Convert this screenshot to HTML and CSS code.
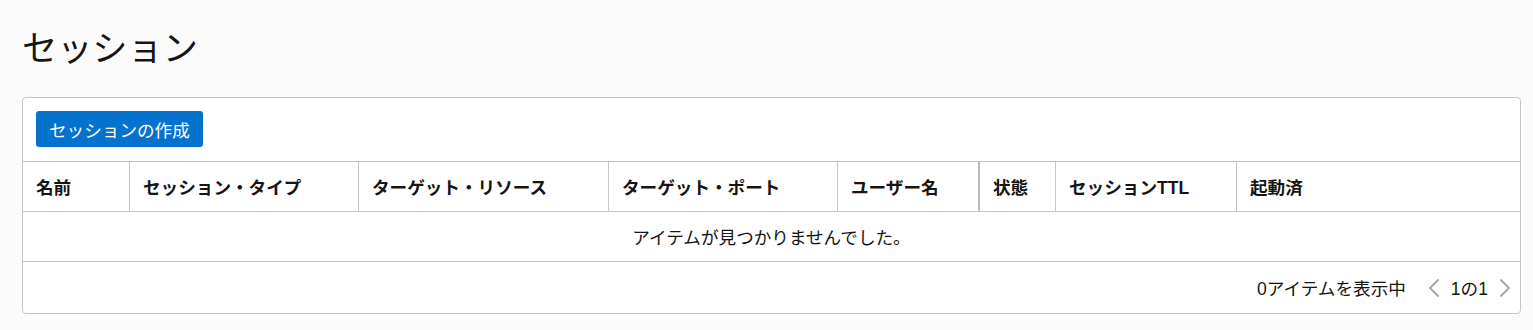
FILE: index.html
```html
<!DOCTYPE html>
<html lang="ja">

<head>
    <meta charset="UTF-8">
    <meta name="viewport" content="width=device-width, initial-scale=1.0">
    <title>セッション</title>
    <link rel="stylesheet" href="styles.css">
</head>

<body>
    <div class="page">
        <h1 class="page-title">セッション</h1>

        <div class="card">
            <div class="toolbar">
                <button class="btn-primary">セッションの作成</button>
            </div>

            <div class="grid">
                <div class="grid-head">
                    <div class="th">名前</div>
                    <div class="th">セッション・タイプ</div>
                    <div class="th">ターゲット・リソース</div>
                    <div class="th">ターゲット・ポート</div>
                    <div class="th sticky-edge">ユーザー名</div>
                    <div class="th">状態</div>
                    <div class="th">セッションTTL</div>
                    <div class="th last">起動済</div>
                </div>
                <div class="empty-row">アイテムが見つかりませんでした。</div>
            </div>

            <div class="pager">
                <span class="pager-count">0アイテムを表示中</span>
                <button class="pager-arrow" aria-label="前へ">
                    <svg width="12" height="20" viewBox="0 0 12 20"><path d="M10.5 1.5 L2 10 L10.5 18.5" fill="none" stroke="#a3a3a3" stroke-width="1.8"/></svg>
                </button>
                <span class="pager-page">1の1</span>
                <button class="pager-arrow" aria-label="次へ">
                    <svg width="12" height="20" viewBox="0 0 12 20"><path d="M1.5 1.5 L10 10 L1.5 18.5" fill="none" stroke="#a3a3a3" stroke-width="1.8"/></svg>
                </button>
            </div>
        </div>
    </div>
</body>

</html>
```

FILE: styles.css
```css
body {
    margin: 0;
    background-color: #fbfbfb;
    color: #161513;
    font-family: "Liberation Sans", "Noto Sans CJK JP", sans-serif;
    font-size: 17.6px;
}

.page {
    padding: 28px 12px 0 22px;
}

.page-title {
    margin: 0 0 27px 0;
    font-size: 35.2px;
    font-weight: normal;
    line-height: 42px;
}

.card {
    background-color: #fff;
    border: 1px solid #c4c5ca;
    border-radius: 4px;
}

.toolbar {
    padding: 13px 13px 14px;
}

.btn-primary {
    display: block;
    height: 36px;
    padding: 0 13px;
    border: none;
    border-radius: 3px;
    background-color: #0572ce;
    color: #fff;
    font-family: inherit;
    font-size: 17.6px;
    cursor: pointer;
}

.grid-head {
    display: grid;
    grid-template-columns: 107px 229px 250px 229px 142px 76px 181px 1fr;
    border-top: 1px solid #c4c5ca;
    border-bottom: 1px solid #c4c5ca;
}

.th {
    height: 49px;
    display: flex;
    align-items: center;
    padding-left: 13px;
    border-right: 1px solid #c4c5ca;
    font-weight: bold;
    white-space: nowrap;
}

.th.sticky-edge {
    border-right: 2px solid #b8bac2;
}

.th.last {
    border-right: none;
}

.empty-row {
    height: 49px;
    display: flex;
    align-items: center;
    justify-content: center;
    border-bottom: 1px solid #c4c5ca;
}

.pager {
    height: 51px;
    display: flex;
    align-items: center;
    justify-content: flex-end;
    padding-right: 9px;
}

.pager-count {
    margin-right: 22px;
}

.pager-arrow {
    background: none;
    border: none;
    padding: 0;
    display: flex;
    align-items: center;
    cursor: pointer;
}

.pager-page {
    margin: 0 11px;
}
```
